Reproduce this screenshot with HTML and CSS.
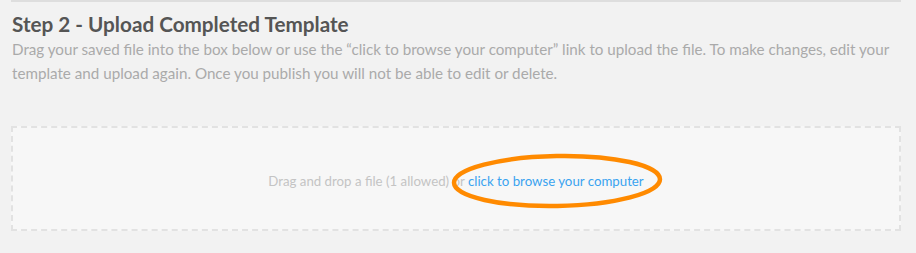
FILE: index.html
```html
<!DOCTYPE html>
<html>
<head>
<meta charset="utf-8">
<link rel="stylesheet" href="styles.css">
</head>
<body>
<section class="step">
  <h2 class="step-title">Step 2 - Upload Completed Template</h2>
  <p class="step-desc">Drag your saved file into the box below or use the “click to browse your computer” link to upload the file. To make changes, edit your template and upload again. Once you publish you will not be able to edit or delete.</p>
  <div class="dropzone">
    <span class="dz-msg">Drag and drop a file (1 allowed) or <a class="dz-link" href="#">click to browse your computer</a></span>
    <svg class="annot" width="216" height="60" viewBox="0 0 216 60">
      <ellipse cx="106" cy="28" rx="103" ry="25" fill="none" stroke="#ff8a00" stroke-width="4.5" transform="rotate(-1 106 28)"/>
    </svg>
  </div>
</section>
</body>
</html>
```
FILE: styles.css
```css
html, body {
  margin: 0;
  padding: 0;
  background: #f2f2f2;
}
body {
  font-family: Lato, "Liberation Sans", sans-serif;
}
.step {
  margin-left: 11px;
  width: 890px;
  border-top: 2px solid #dedede;
  padding-top: 9px;
}
.step-title {
  margin: 0 0 0 1px;
  font-size: 20.7px;
  line-height: 26px;
  font-weight: 700;
  color: #555555;
}
.step-desc {
  margin: 0 0 0 1px;
  font-size: 15.2px;
  line-height: 24px;
  color: #aaaaaa;
}
.dropzone {
  position: relative;
  margin-top: 41px;
  height: 101px;
  border: 2px dashed #e2e2e2;
  background: #f7f7f7;
  display: flex;
  align-items: center;
  justify-content: center;
}
.dz-msg {
  font-size: 13.25px;
  color: #c4c4c4;
  margin-top: 4px;
}
.dz-link {
  color: #3aa3f0;
  text-decoration: none;
}
.annot {
  position: absolute;
  left: 438px;
  top: 25px;
}
```
